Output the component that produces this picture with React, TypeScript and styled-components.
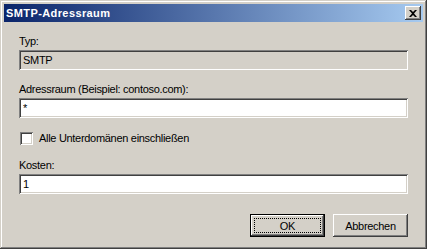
import React from "react";
import styled, { createGlobalStyle } from "styled-components";

const Global = createGlobalStyle`
  html, body { margin: 0; padding: 0; background: #d4d0c8; }
  body { font-family: "Liberation Sans", Arial, sans-serif; font-size: 11px; }
  * { box-sizing: border-box; }
`;

const Window = styled.div`
  width: 427px;
  height: 249px;
  background: #d4d0c8;
  padding: 4px;
  display: flex;
  flex-direction: column;
  box-shadow: inset -1px -1px #404040, inset 1px 1px #d4d0c8,
    inset -2px -2px #808080, inset 2px 2px #ffffff;
`;

const TitleBar = styled.div`
  height: 18px;
  display: flex;
  align-items: center;
  justify-content: space-between;
  padding: 0 2px 0 2px;
  background: linear-gradient(to right, #0a246a, #a6caf0);
`;

const Title = styled.span`
  color: #fff;
  font-weight: bold;
  font-size: 11px;
  letter-spacing: 0.4px;
  line-height: 13px;
`;

const CloseButton = styled.div`
  width: 16px;
  height: 14px;
  background: #d4d0c8;
  display: flex;
  align-items: center;
  justify-content: center;
  box-shadow: inset -1px -1px #404040, inset 1px 1px #ffffff,
    inset -2px -2px #808080, inset 2px 2px #d4d0c8;
`;

const Body = styled.div`
  flex: 1;
  display: flex;
  flex-direction: column;
  padding: 13px 15px 0 15px;
`;

const Label = styled.div<{ $gap?: number }>`
  line-height: 13px;
  height: 13px;
  color: #000;
  letter-spacing: -0.3px;
  margin-top: ${(p) => p.$gap ?? 0}px;
  margin-bottom: 2px;
`;

const Field = styled.div<{ $readOnly?: boolean }>`
  height: 20px;
  background: ${(p) => (p.$readOnly ? "#d4d0c8" : "#ffffff")};
  box-shadow: inset 1px 1px #808080, inset -1px -1px #ffffff,
    inset 2px 2px #404040, inset -2px -2px #d4d0c8;
  padding: 0 4px;
  display: flex;
  align-items: center;
  line-height: 13px;
  letter-spacing: -0.3px;
  color: #000;
`;

const CheckRow = styled.label`
  display: flex;
  align-items: center;
  gap: 6px;
  margin-top: 14px;
  padding-left: 1px;
  line-height: 13px;
  letter-spacing: -0.3px;
`;

const CheckBox = styled.span`
  width: 13px;
  height: 13px;
  background: #fff;
  box-shadow: inset 1px 1px #808080, inset -1px -1px #ffffff,
    inset 2px 2px #404040, inset -2px -2px #d4d0c8;
`;

const ButtonRow = styled.div`
  display: flex;
  justify-content: flex-end;
  gap: 8px;
  margin-top: 20px;
`;

const Button = styled.div<{ $default?: boolean }>`
  width: 75px;
  height: 23px;
  background: #d4d0c8;
  display: flex;
  align-items: center;
  justify-content: center;
  position: relative;
  letter-spacing: -0.3px;
  color: #000;
  border: ${(p) => (p.$default ? "1px solid #000" : "none")};
  box-shadow: inset -1px -1px #404040, inset 1px 1px #ffffff,
    inset -2px -2px #808080, inset 2px 2px #d4d0c8;
`;

const Focus = styled.div`
  position: absolute;
  inset: 3px;
  border: 1px dotted #000;
`;

export default function App() {
  return (
    <>
      <Global />
      <Window>
        <TitleBar>
          <Title>SMTP-Adressraum</Title>
          <CloseButton>
            <svg width="8" height="7" viewBox="0 0 8 7">
              <path
                d="M0 0h2l2 2 2-2h2L5 3.5 8 7H6L4 5 2 7H0l3-3.5z"
                fill="#000"
              />
            </svg>
          </CloseButton>
        </TitleBar>
        <Body>
          <Label>Typ:</Label>
          <Field $readOnly>SMTP</Field>
          <Label $gap={13}>Adressraum (Beispiel: contoso.com):</Label>
          <Field>*</Field>
          <CheckRow>
            <CheckBox />
            <span>Alle Unterdomänen einschließen</span>
          </CheckRow>
          <Label $gap={14}>Kosten:</Label>
          <Field>1</Field>
          <ButtonRow>
            <Button $default>
              <Focus />
              OK
            </Button>
            <Button>Abbrechen</Button>
          </ButtonRow>
        </Body>
      </Window>
    </>
  );
}
